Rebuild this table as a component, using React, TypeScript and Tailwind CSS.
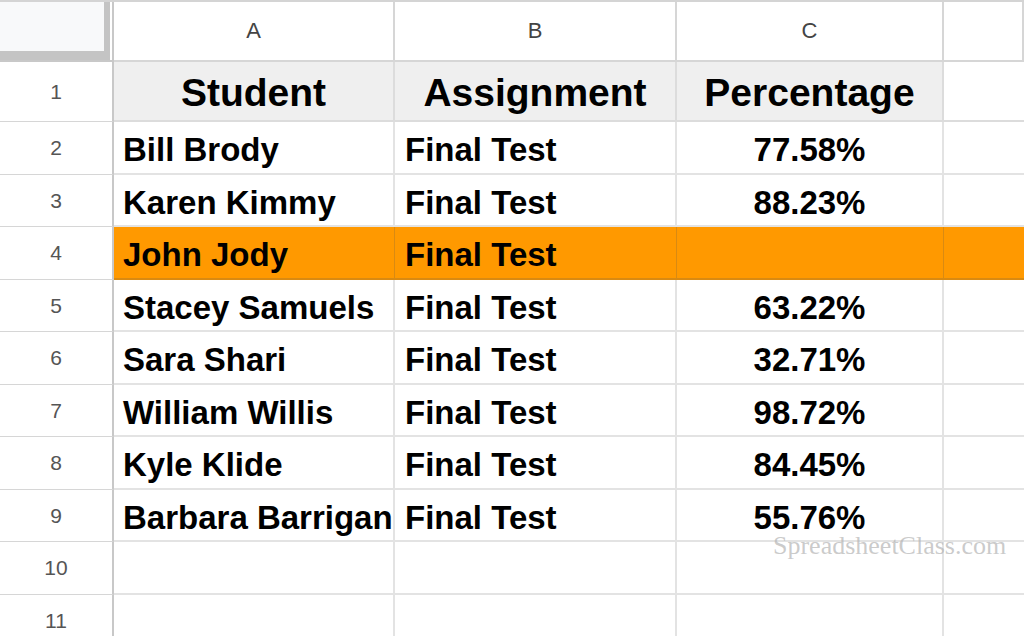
const rows = [
  { name: 'Bill Brody', test: 'Final Test', pct: '77.58%' },
  { name: 'Karen Kimmy', test: 'Final Test', pct: '88.23%' },
  { name: 'John Jody', test: 'Final Test', pct: '', highlight: true },
  { name: 'Stacey Samuels', test: 'Final Test', pct: '63.22%' },
  { name: 'Sara Shari', test: 'Final Test', pct: '32.71%' },
  { name: 'William Willis', test: 'Final Test', pct: '98.72%' },
  { name: 'Kyle Klide', test: 'Final Test', pct: '84.45%' },
  { name: 'Barbara Barrigan', test: 'Final Test', pct: '55.76%' },
  { name: '', test: '', pct: '' },
  { name: '', test: '', pct: '' },
];

const cols = 'grid grid-cols-[114px_281px_282px_267px_1fr]';

const RowNum = ({ n }: { n: number }) => (
  <div className="flex items-center justify-center border-r-2 border-b border-r-[#c8c8c8] border-b-[#d6d6d6] text-[21px] leading-none text-[#555]">
    {n}
  </div>
);

export default function App() {
  return (
    <div
      className="relative h-[636px] w-[1024px] overflow-hidden bg-white text-black"
      style={{ fontFamily: '"Liberation Sans", Arial, sans-serif' }}
    >
      {/* column letters */}
      <div className={`${cols} h-[62px] border-t-2 border-[#d4d4d4]`}>
        <div className="relative border-b-2 border-r-2 border-[#c8c8c8]">
          <div className="h-[58px] w-[110px] border-r-[6px] border-b-[9px] border-[#c4c4c4] bg-[#f8f9fa]" />
        </div>
        {['A', 'B', 'C', ''].map((l, i) => (
          <div
            key={i}
            className="flex items-center justify-center border-b-2 border-r-2 border-[#d6d6d6] text-[22px] leading-none text-[#444]"
          >
            {l}
          </div>
        ))}
      </div>

      {/* header row */}
      <div className={`${cols} h-[60px]`}>
        <RowNum n={1} />
        {['Student', 'Assignment', 'Percentage'].map((h) => (
          <div
            key={h}
            className="flex items-center justify-center border-r-2 border-b-2 border-[#dcdcdc] bg-[#efefef] pt-[2px] text-[39px] leading-none font-bold"
          >
            {h}
          </div>
        ))}
        <div className="border-b-2 border-[#dcdcdc]" />
      </div>

      {rows.map((r, i) => {
        const cell = r.highlight
          ? 'border-r border-b-2 border-[#d98a12] bg-[#ff9900]'
          : 'border-r-2 border-b-2 border-[#e3e3e3]';
        return (
          <div key={i} className={`${cols} h-[52.5px]`}>
            <RowNum n={i + 2} />
            <div className={`${cell} flex items-center pl-[9px] pt-[5px] text-[33px] leading-none font-bold whitespace-nowrap`}>
              {r.name}
            </div>
            <div className={`${cell} flex items-center pl-[10px] pt-[5px] text-[33px] leading-none font-bold`}>
              {r.test}
            </div>
            <div className={`${cell} flex items-center justify-center pt-[5px] text-[33px] leading-none font-bold`}>
              {r.pct}
            </div>
            <div className={r.highlight ? 'border-b-2 border-[#d98a12] bg-[#ff9900]' : 'border-b-2 border-[#e3e3e3]'} />
          </div>
        );
      })}

      {/* watermark */}
      <div
        className="absolute left-[773px] top-[533px] text-[26px] leading-none text-[#b4b4b4]/70"
        style={{ fontFamily: '"Liberation Serif", "Times New Roman", serif' }}
      >
        SpreadsheetClass.com
      </div>
    </div>
  );
}
